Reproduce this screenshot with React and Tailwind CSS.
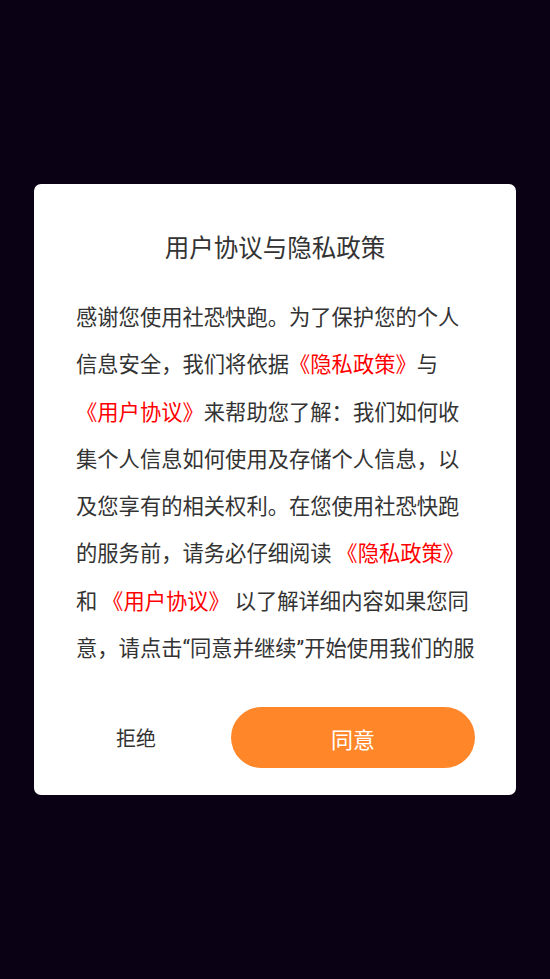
export default function App() {
  const red = "text-[#ff0000]";
  const q = "font-['Roboto',sans-serif]";
  return (
    <div
      className="min-h-screen w-full bg-[#0b0114] flex items-center justify-center"
      style={{ fontFamily: '"Noto Sans CJK SC", "Noto Sans", sans-serif' }}
    >
      <div className="w-[482px] h-[611px] bg-white rounded-[7px] flex flex-col pt-[46px] pb-[27px]">
        <div className="text-center text-[24.5px] leading-[34px] text-[#333333]">
          用户协议与隐私政策
        </div>
        <div className="mt-[28px] pl-[42px] pr-[40px] h-[379px] overflow-hidden">
          <p className="text-[21.3px] leading-[47.3px] text-[#333333] break-all">
            感谢您使用社恐快跑。为了保护您的个人信息安全，我们将依据
            <span className={red}>《隐私政策》</span>与
            <span className={red}>《用户协议》</span>
            来帮助您了解：我们如何收集个人信息如何使用及存储个人信息，以及您享有的相关权利。在您使用社恐快跑的服务前，请务必仔细阅读 <span className={red}>《隐私政策》</span>和 <span className={red}>《用户协议》</span> 以了解详细内容如果您同意，请点击<span className={q}>“</span>同意并继续<span className={q}>”</span>开始使用我们的服务。如您不同意，将无法使用我们的产品和服务。
          </p>
        </div>
        <div className="mt-auto flex items-center">
          <button className="ml-[82px] text-[20px] leading-[28px] text-[#333333]">
            拒绝
          </button>
          <button className="ml-auto mr-[41px] w-[244px] h-[61px] rounded-full bg-[#ff8629] text-white text-[22px] leading-[30px]">
            同意
          </button>
        </div>
      </div>
    </div>
  );
}
